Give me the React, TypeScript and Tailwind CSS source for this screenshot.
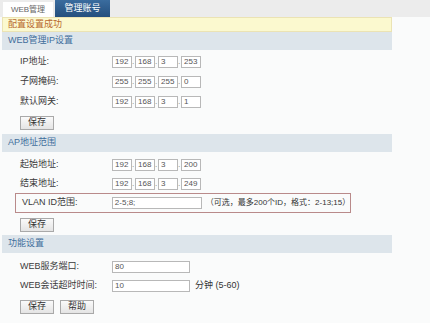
import React from 'react';

const font = "font-['Liberation_Sans','Noto_Sans_CJK_SC',sans-serif]";

function Header({ title, className = '' }: { title: string; className?: string }) {
  return (
    <div className={`flex h-[18px] items-center bg-[#dde5eb] pl-[6px] text-[9px] text-[#3f6e9c] ${className}`}>
      {title}
    </div>
  );
}

function Box({ value, w = 'w-[20px]' }: { value: string; w?: string }) {
  return (
    <div className={`flex h-[12px] ${w} items-center border border-[#b8b8b8] bg-white pl-[2px] text-[8px] text-[#555]`}>
      {value}
    </div>
  );
}

function IpRow({ label, ip }: { label: string; ip: string[] }) {
  return (
    <div className="flex h-[19px] items-center">
      <div className="w-[110px] pl-[18px] text-[9px] text-[#3a3a3a]">{label}</div>
      <div className="flex items-center">
        {ip.map((part, i) => (
          <React.Fragment key={i}>
            {i > 0 && <span className="w-[3px] text-[8px] leading-none text-[#777]">.</span>}
            <Box value={part} />
          </React.Fragment>
        ))}
      </div>
    </div>
  );
}

function Btn({ label }: { label: string }) {
  return (
    <div className="flex h-[14px] w-[34px] items-center justify-center border border-[#a9a9a9] bg-gradient-to-b from-[#fafafa] to-[#e4e4e4] text-[9px] text-[#333]">
      {label}
    </div>
  );
}

export default function App() {
  return (
    <div className={`h-[323px] w-[430px] overflow-hidden bg-[#fafbfb] ${font}`}>
      {/* tabs */}
      <div className="flex h-[17px] items-end gap-[2px] bg-[#ececec] pl-[3px]">
        <div className="flex h-[15px] w-[50px] items-center justify-center bg-white text-[8px] text-[#666]">WEB管理</div>
        <div className="flex h-[17px] w-[55px] items-center justify-center bg-gradient-to-b from-[#3a6c9e] to-[#244f7e] text-[9px] text-white">
          管理账号
        </div>
      </div>

      <div className="ml-[2px] w-[390px]">
        <div className="flex h-[15px] items-center border border-[#ebe3b4] bg-[#fbf9cf] pl-[5px] text-[9px] text-[#b8682e]">
          配置设置成功
        </div>

        <Header title="WEB管理IP设置" />
        <div className="pt-[2px]">
          <div className="h-[20px] flex items-center"><IpRow label="IP地址:" ip={['192', '168', '3', '253']} /></div>
          <div className="h-[20px] flex items-center"><IpRow label="子网掩码:" ip={['255', '255', '255', '0']} /></div>
          <div className="h-[20px] flex items-center"><IpRow label="默认网关:" ip={['192', '168', '3', '1']} /></div>
          <div className="flex h-[22px] items-center pl-[18px]">
            <Btn label="保存" />
          </div>
        </div>

        <Header title="AP地址范围" />
        <div className="pt-[3px]">
          <IpRow label="起始地址:" ip={['192', '168', '3', '200']} />
          <IpRow label="结束地址:" ip={['192', '168', '3', '249']} />
        </div>
      </div>

      <div className="ml-[15px] flex h-[20px] w-[336px] items-center border border-[#b98a8a]">
        <div className="w-[96px] pl-[6px] text-[9px] text-[#3a3a3a]">VLAN ID范围:</div>
        <Box value="2-5;8;" w="w-[90px]" />
        <span className="ml-[4px] text-[8px] text-[#333]">（可选，最多200个ID，格式：2-13;15）</span>
      </div>

      <div className="ml-[2px] w-[390px]">
        <div className="mt-[5px] pl-[18px]">
          <Btn label="保存" />
        </div>

        <Header title="功能设置" className="mt-[3px] h-[17px]" />
        <div className="pt-[4px]">
          <div className="flex h-[19px] items-center">
            <div className="w-[110px] pl-[18px] text-[9px] text-[#3a3a3a]">WEB服务端口:</div>
            <Box value="80" w="w-[78px]" />
          </div>
          <div className="flex h-[19px] items-center">
            <div className="w-[110px] pl-[18px] text-[9px] text-[#3a3a3a]">WEB会话超时时间:</div>
            <Box value="10" w="w-[78px]" />
            <span className="ml-[5px] text-[9px] text-[#333]">分钟 (5-60)</span>
          </div>
        </div>
        <div className="mt-[5px] flex gap-[6px] pl-[18px]">
          <Btn label="保存" />
          <Btn label="帮助" />
        </div>
        <div className="mt-[9px] border-b border-[#dcdcdc]" />
      </div>
    </div>
  );
}
